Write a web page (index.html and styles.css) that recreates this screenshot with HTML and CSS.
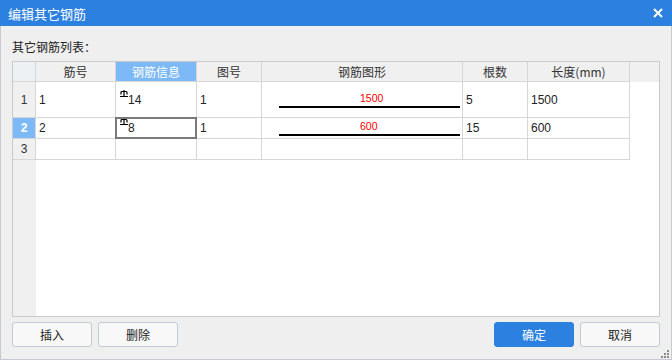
FILE: index.html
```html
<!DOCTYPE html>
<html lang="zh-CN">
<head>
  <meta charset="UTF-8" />
  <title>编辑其它钢筋</title>
  <link rel="stylesheet" href="styles.css">
</head>
<body>
  <div class="dialog">
    <!-- 标题栏 -->
    <div class="titlebar">
      <span class="title">编辑其它钢筋</span>
      <svg class="close" width="10" height="10" viewBox="0 0 10 10">
        <path d="M1 1 L9 9 M9 1 L1 9" stroke="#fff" stroke-width="2" />
      </svg>
    </div>

    <div class="main">
      <div class="caption">其它钢筋列表：</div>

      <div class="grid">
        <div class="row head">
          <div class="cell corner"></div>
          <div class="cell">筋号</div>
          <div class="cell selected">钢筋信息</div>
          <div class="cell">图号</div>
          <div class="cell">钢筋图形</div>
          <div class="cell">根数</div>
          <div class="cell">长度(mm)</div>
          <div class="fill"></div>
        </div>

        <div class="row tall">
          <div class="cell num">1</div>
          <div class="cell">1</div>
          <div class="cell"><span><svg class="grade" width="8" height="7" viewBox="0 0 8 7"><path d="M4 0 V6.5 M1 4.5 V2.5 Q1 1.5 2 1.5 H6 Q7 1.5 7 2.5 V4.5 M0 6.5 H8" stroke="#000" stroke-width="1.2" fill="none" /></svg>14</span></div>
          <div class="cell">1</div>
          <div class="cell shape">
            <div class="len">1500</div>
            <div class="bar"></div>
          </div>
          <div class="cell">5</div>
          <div class="cell">1500</div>
          <div class="fill"></div>
        </div>

        <div class="row">
          <div class="cell num current">2</div>
          <div class="cell">2</div>
          <div class="cell focus"><span><svg class="grade" width="8" height="7" viewBox="0 0 8 7"><path d="M4 0 V6.5 M1 4.5 V2.5 Q1 1.5 2 1.5 H6 Q7 1.5 7 2.5 V4.5 M0 6.5 H8" stroke="#000" stroke-width="1.2" fill="none" /></svg>8</span></div>
          <div class="cell">1</div>
          <div class="cell shape">
            <div class="len">600</div>
            <div class="bar"></div>
          </div>
          <div class="cell">15</div>
          <div class="cell">600</div>
          <div class="fill"></div>
        </div>

        <div class="row">
          <div class="cell num">3</div>
          <div class="cell"></div>
          <div class="cell"></div>
          <div class="cell"></div>
          <div class="cell"></div>
          <div class="cell"></div>
          <div class="cell"></div>
          <div class="fill"></div>
        </div>
      </div>

      <div class="actions">
        <div class="group">
          <button class="btn">插入</button>
          <button class="btn">删除</button>
        </div>
        <div class="group">
          <button class="btn primary">确定</button>
          <button class="btn">取消</button>
        </div>
      </div>

      <!-- 右下角拖拽点 -->
      <svg class="grip" width="8" height="8" viewBox="0 0 8 8">
        <rect x="6" y="0" width="2" height="2" fill="#8a8a8a" />
        <rect x="3" y="3" width="2" height="2" fill="#8a8a8a" />
        <rect x="6" y="3" width="2" height="2" fill="#8a8a8a" />
        <rect x="0" y="6" width="2" height="2" fill="#8a8a8a" />
        <rect x="3" y="6" width="2" height="2" fill="#8a8a8a" />
        <rect x="6" y="6" width="2" height="2" fill="#8a8a8a" />
      </svg>
    </div>
  </div>
</body>
</html>
```

FILE: styles.css
```css
body {
  margin: 0;
  font-family: "Liberation Sans", "Noto Sans CJK SC", sans-serif;
  font-size: 12px;
  color: #222;
}

.dialog {
  width: 672px;
  height: 360px;
  display: flex;
  flex-direction: column;
  background: #efefef;
}

.titlebar {
  height: 26px;
  background: #2b80e0;
  display: flex;
  align-items: center;
  justify-content: space-between;
  padding: 0 9px 0 8px;
}

.title {
  color: #fff;
  font-size: 13px;
  font-family: "Noto Sans CJK SC", sans-serif;
}

.main {
  flex: 1;
  display: flex;
  flex-direction: column;
  padding: 0 11px 12px 11px;
  border: 1px solid #c6cad0;
  border-top: none;
  position: relative;
}

.caption {
  padding-top: 12px;
  line-height: 18px;
  margin-bottom: 5px;
  font-family: "Noto Sans CJK SC", sans-serif;
  color: #222;
}

/* 表格 */
.grid {
  flex: 1;
  border: 1px solid #c9c9c9;
  background: linear-gradient(to right, #f0f0f0 23px, #fff 23px);
}

.row {
  display: grid;
  grid-template-columns: 23px 80px 81px 65px 201px 65px 102px 1fr;
  height: 21px;
}

.row.head {
  height: 20px;
}

.row.tall {
  height: 36px;
}

.cell {
  box-sizing: border-box;
  border-right: 1px solid #d6d6d6;
  border-bottom: 1px solid #d6d6d6;
  padding: 0 3px;
  display: flex;
  align-items: center;
  position: relative;
  background: #fff;
}

.head .cell {
  justify-content: center;
  background: #f0f0f0;
  color: #333;
  font-family: "Noto Sans CJK SC", sans-serif;
}

.head .fill {
  background: #f0f0f0;
}

.head .corner {
  background: #eef1f4;
}

.head .selected {
  background: #7db9f6;
  color: #fff;
}

.cell.num {
  justify-content: center;
  background: #f0f0f0;
  color: #333;
}

.cell.num.current {
  background: #7db9f6;
  color: #fff;
  font-weight: bold;
}

.cell.focus::after {
  content: "";
  position: absolute;
  top: -1px;
  left: -1px;
  right: -1px;
  bottom: -1px;
  border: 2px solid #7a7a7a;
}

.grade {
  position: relative;
  top: -7px;
  margin-left: 1px;
}

/* 钢筋图形 */
.cell.shape {
  flex-direction: column;
  align-items: stretch;
  justify-content: center;
  padding: 0 2px 0 17px;
}

.len {
  color: #f00;
  font-size: 10.5px;
  line-height: 13px;
  padding-left: 81px;
}

.bar {
  height: 2px;
  background: #000;
  margin-top: 1px;
}

/* 按钮 */
.actions {
  display: flex;
  justify-content: space-between;
  margin-top: 5px;
}

.group {
  display: flex;
  gap: 6px;
}

.btn {
  width: 80px;
  height: 25px;
  border: 1px solid #c3cad6;
  border-radius: 3px;
  background: #f8f8f8;
  color: #222;
  font-size: 12px;
  font-family: "Noto Sans CJK SC", sans-serif;
  padding: 0;
}

.btn.primary {
  background: #2b80e0;
  border-color: #2b80e0;
  color: #fff;
}

.grip {
  position: absolute;
  right: 2px;
  bottom: 1px;
}
```
